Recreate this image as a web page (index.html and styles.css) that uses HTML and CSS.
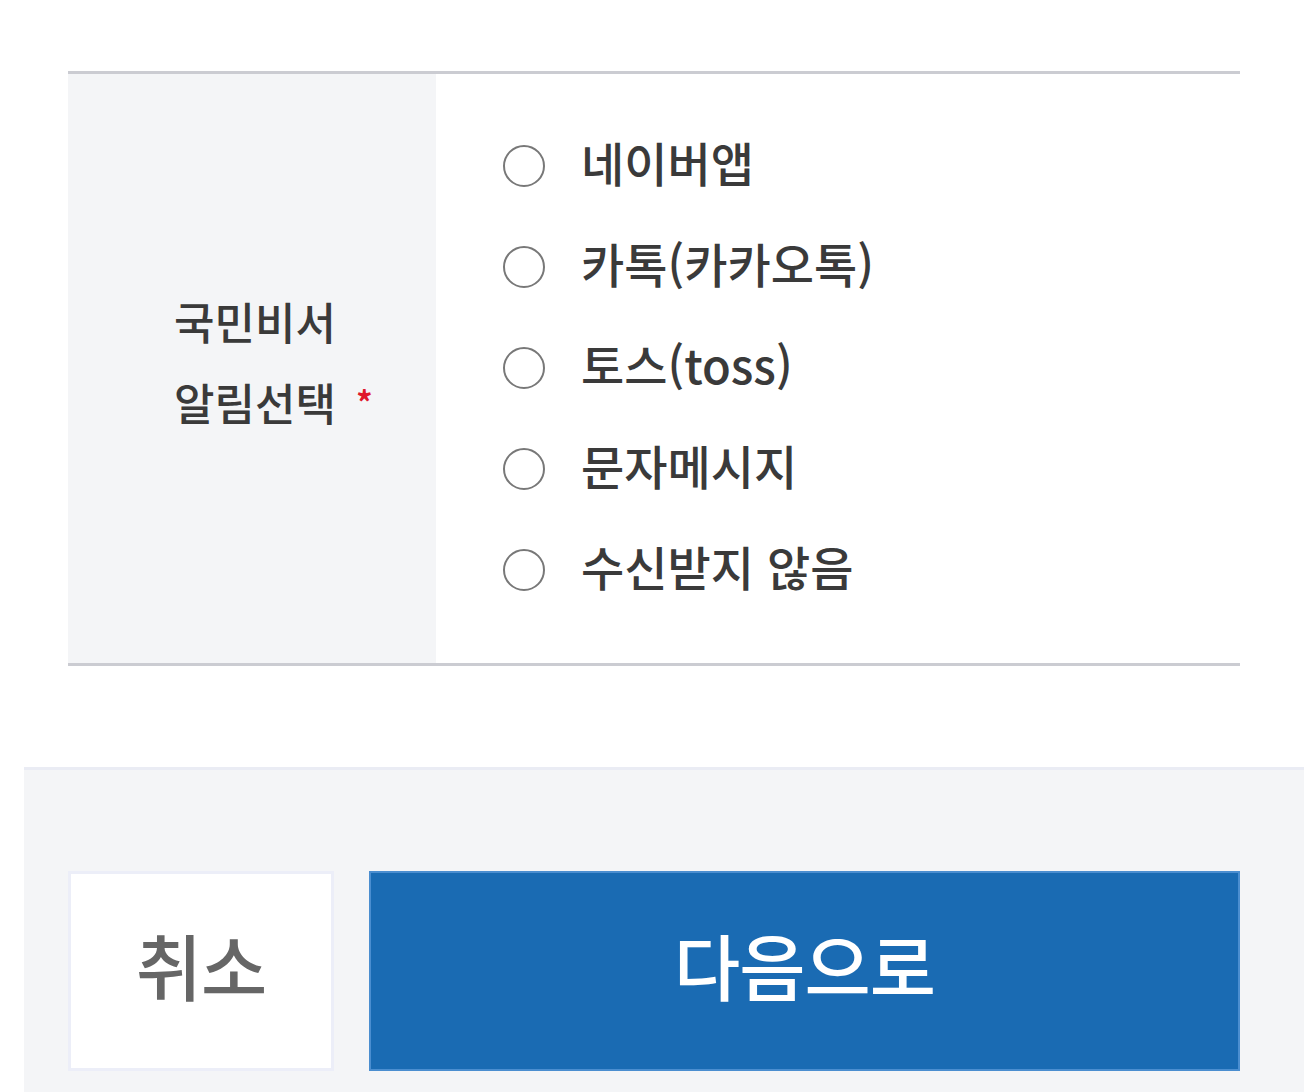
FILE: index.html
```html
<!DOCTYPE html>
<html lang="ko">
<head>
<meta charset="utf-8">
<title>국민비서 알림선택</title>
<link rel="stylesheet" href="styles.css">
</head>
<body>
<div class="page">
  <section class="form-table">
    <div class="row">
      <div class="label">
        <span>국민비서</span>
        <span>알림선택 <em class="req">*</em></span>
      </div>
      <div class="options">
        <label class="opt"><span class="radio"></span><span class="txt">네이버앱</span></label>
        <label class="opt"><span class="radio"></span><span class="txt">카톡(카카오톡)</span></label>
        <label class="opt"><span class="radio"></span><span class="txt">토스(toss)</span></label>
        <label class="opt"><span class="radio"></span><span class="txt">문자메시지</span></label>
        <label class="opt"><span class="radio"></span><span class="txt">수신받지 않음</span></label>
      </div>
    </div>
  </section>
  <footer class="actions">
    <button class="btn cancel">취소</button>
    <button class="btn next">다음으로</button>
  </footer>
</div>
</body>
</html>
```
FILE: styles.css
```css
html, body {
  margin: 0;
  padding: 0;
  background: #ffffff;
}
body {
  font-family: "Noto Sans CJK KR", "Noto Sans", sans-serif;
  color: #333;
}
.page {
  padding-top: 71px;
}
.form-table {
  margin: 0 72px 0 68px;
  border-top: 3px solid #cbccd2;
  border-bottom: 3px solid #cbccd2;
}
.row {
  display: grid;
  grid-template-columns: 368px 1fr;
}
.label {
  background: #f4f5f7;
  display: flex;
  flex-direction: column;
  justify-content: center;
  align-items: center;
  font-size: 44px;
  font-weight: 500;
  line-height: 80px;
  color: #3a3a3a;
  padding-left: 40px;
  padding-bottom: 14px;
}
.label span {
  display: block;
  width: 196px;
  white-space: nowrap;
}
.req {
  font-style: normal;
  color: #e0182d;
  font-size: 32px;
  font-weight: 700;
  vertical-align: 6px;
  margin-left: 8px;
}
.options {
  padding: 41px 0 43px 67px;
  display: flex;
  flex-direction: column;
}
.opt {
  height: 101px;
  display: flex;
  align-items: center;
}
.radio {
  width: 38px;
  height: 38px;
  border: 2px solid #787878;
  border-radius: 50%;
  box-sizing: content-box;
  flex: none;
}
.txt {
  margin-left: 36px;
  font-size: 47px;
  font-weight: 500;
  color: #3a3a3a;
  line-height: 1;
  margin-top: -8px;
}
.actions {
  margin: 101px 8px 0 24px;
  background: #f4f5f7;
  border-top: 3px solid #eaecf4;
  padding: 101px 64px 24px 44px;
  display: flex;
  gap: 35px;
}
.btn {
  height: 200px;
  font-family: "Noto Sans CJK KR", "Noto Sans", sans-serif;
  font-size: 72px;
  font-weight: 500;
  letter-spacing: -1px;
  padding: 0 0 16px 0;
  cursor: pointer;
}
.cancel {
  width: 266px;
  flex: none;
  background: #ffffff;
  border: 3px solid #eceef8;
  color: #666;
}
.next {
  flex: 1;
  background: #1a6bb3;
  border: 2px solid #4b8ed0;
  color: #ffffff;
}
```
